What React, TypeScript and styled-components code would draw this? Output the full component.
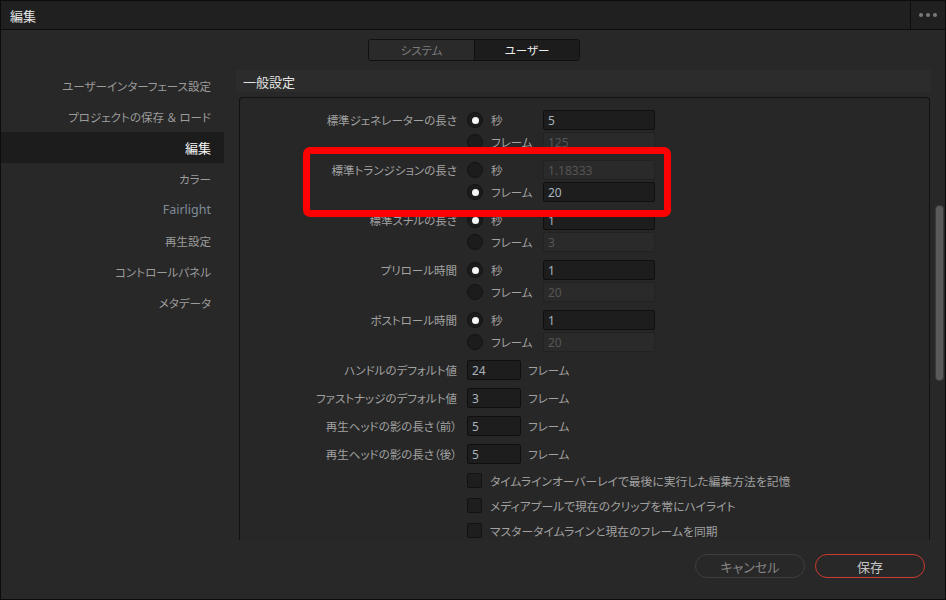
import React from "react";
import styled, { createGlobalStyle } from "styled-components";

const Global = createGlobalStyle`
  html, body { margin: 0; padding: 0; background: #282828; }
  body { font-family: "Noto Sans", "Noto Sans CJK JP", sans-serif; }
  * { box-sizing: border-box; }
`;

const Window = styled.div`
  position: relative;
  width: 946px;
  height: 600px;
  border: 1px solid #0c0c0c;
  background: #282828;
  display: flex;
  flex-direction: column;
  overflow: hidden;
  font-family: "Noto Sans", "Noto Sans CJK JP", sans-serif;
  font-feature-settings: "palt";
`;

const TitleBar = styled.div`
  height: 29px;
  flex-shrink: 0;
  display: flex;
  align-items: stretch;
  background: #202020;
  border-bottom: 1px solid #0e0e0e;
`;

const Title = styled.div`
  flex: 1;
  display: flex;
  align-items: center;
  padding-left: 9px;
  font-size: 13px;
  color: #e6e6e6;
`;

const MenuButton = styled.div`
  width: 35px;
  border-left: 1px solid #0e0e0e;
  display: flex;
  align-items: center;
  justify-content: center;
  gap: 3px;
`;

const Dot = styled.span`
  width: 4px;
  height: 4px;
  border-radius: 50%;
  background: #7a7a7a;
`;

const TabsRow = styled.div`
  height: 40px;
  flex-shrink: 0;
  display: flex;
  justify-content: center;
  padding-top: 9px;
  padding-left: 2px;
`;

const Tabs = styled.div`
  display: flex;
  height: 22px;
  border: 1px solid #101010;
  border-radius: 3px;
  overflow: hidden;
`;

const Tab = styled.div<{ $active?: boolean }>`
  width: 105px;
  display: flex;
  align-items: center;
  justify-content: center;
  font-size: 11.5px;
  color: ${(p) => (p.$active ? "#ececec" : "#7c7c7c")};
  background: ${(p) => (p.$active ? "#1c1c1c" : "#2a2a2a")};
  & + & { border-left: 1px solid #101010; }
`;

const Main = styled.div`
  height: 470px;
  flex-shrink: 0;
  display: flex;
  overflow: hidden;
`;

const Sidebar = styled.div`
  width: 223px;
  flex-shrink: 0;
  display: flex;
  flex-direction: column;
`;

const NavItem = styled.div<{ $active?: boolean; $muted?: boolean }>`
  height: 31px;
  flex-shrink: 0;
  display: flex;
  align-items: center;
  justify-content: flex-end;
  padding-right: 13px;
  color: ${(p) => (p.$active ? "#f4f4f4" : p.$muted ? "#7f8c98" : "#9c9c9c")};
  background: ${(p) => (p.$active ? "#1c1c1c" : "transparent")};
  font-size: ${(p) => (p.$active ? "13px" : p.$muted ? "12.5px" : "11.5px")};
`;

const Content = styled.div`
  flex: 1;
  margin-left: 12px;
  display: flex;
  flex-direction: column;
  min-width: 0;
`;

const SectionHeader = styled.div`
  height: 22px;
  flex-shrink: 0;
  display: flex;
  align-items: center;
  padding-left: 7px;
  margin-right: 14px;
  background: #2c2c2c;
  font-size: 13px;
  color: #e4e4e4;
`;

const ScrollArea = styled.div`
  flex: 1;
  display: flex;
  margin-top: 5px;
  min-height: 0;
`;

const Panel = styled.div`
  width: 691px;
  margin-left: 3px;
  flex-shrink: 0;
  border: 1px solid #121212;
  border-bottom: none;
  border-radius: 4px 4px 0 0;
  background: #272727;
  padding-top: 11px;
  display: flex;
  flex-direction: column;
  height: 480px;
`;

const Track = styled.div`
  width: 17px;
  flex-shrink: 0;
  padding-left: 5px;
`;

const Thumb = styled.div<{ $offset: number; $size: number }>`
  margin-top: ${(p) => p.$offset}px;
  width: 9px;
  height: ${(p) => p.$size}px;
  border-radius: 4px;
  background: #5a5a5a;
  border: 1px solid #3a3a3a;
`;

const RadioSection = styled.div`
  display: flex;
  flex-direction: column;
  gap: 6px;
`;

const Group = styled.div`
  display: flex;
  flex-direction: column;
`;

const FrameSection = styled.div`
  display: flex;
  flex-direction: column;
  margin-top: 3px;
`;

const Row = styled.div<{ $h: number }>`
  height: ${(p) => p.$h}px;
  flex-shrink: 0;
  display: flex;
  align-items: center;
`;

const Label = styled.div`
  width: 217px;
  flex-shrink: 0;
  text-align: right;
  font-size: 11.5px;
  color: #a2a2a2;
  white-space: nowrap;
`;

const Controls = styled.div`
  display: flex;
  align-items: center;
  margin-left: 10px;
`;

const Radio = styled.span<{ $on?: boolean }>`
  width: 16px;
  height: 16px;
  border-radius: 50%;
  background: #1c1c1c;
  border: 1px solid #131313;
  display: flex;
  align-items: center;
  justify-content: center;
  flex-shrink: 0;
  &::after {
    content: "";
    width: 7px;
    height: 7px;
    border-radius: 50%;
    background: #f6f6f6;
    display: ${(p) => (p.$on ? "block" : "none")};
  }
`;

const OptText = styled.span<{ $w?: number; $size?: number }>`
  margin-left: 8px;
  width: ${(p) => (p.$w ? `${p.$w}px` : "auto")};
  font-size: ${(p) => p.$size ?? 11.5}px;
  color: #a2a2a2;
  white-space: nowrap;
`;

const Field = styled.div<{ $w: number; $disabled?: boolean }>`
  width: ${(p) => p.$w}px;
  height: 20px;
  display: flex;
  align-items: center;
  padding-left: 4px;
  border-radius: 2px;
  font-family: "Noto Sans", sans-serif;
  font-size: 12px;
  background: ${(p) => (p.$disabled ? "#2a2a2a" : "#1d1d1d")};
  border: 1px solid ${(p) => (p.$disabled ? "#222222" : "#0f0f0f")};
  color: ${(p) => (p.$disabled ? "#555555" : "#a9b3bd")};
`;

const Unit = styled.span`
  margin-left: 7px;
  font-size: 11.5px;
  color: #a2a2a2;
`;

const CheckRows = styled.div`
  display: flex;
  flex-direction: column;
`;

const Check = styled.span`
  width: 15px;
  height: 15px;
  border-radius: 2px;
  background: #1e1e1e;
  border: 1px solid #121212;
  flex-shrink: 0;
`;

const Footer = styled.div`
  flex: 1;
  display: flex;
  justify-content: flex-end;
  align-items: flex-start;
  padding-top: 14px;
  padding-right: 20px;
  gap: 10px;
  background: #282828;
`;

const Button = styled.div<{ $primary?: boolean }>`
  width: 110px;
  height: 24px;
  border-radius: 12px;
  display: flex;
  align-items: center;
  justify-content: center;
  font-size: 13px;
  color: ${(p) => (p.$primary ? "#c4c4c4" : "#858585")};
  border: 1px solid ${(p) => (p.$primary ? "#cf3a2e" : "#3e3e3e")};
`;

const Annotation = styled.div`
  position: absolute;
  left: 302px;
  top: 146px;
  width: 368px;
  height: 70px;
  border: 7px solid #ff0000;
  border-radius: 7px;
  pointer-events: none;
`;

type RadioGroupData = {
  label: string;
  sec: string;
  frame: string;
  secOn: boolean;
};

const radioGroups: RadioGroupData[] = [
  { label: "標準ジェネレーターの長さ", sec: "5", frame: "125", secOn: true },
  { label: "標準トランジションの長さ", sec: "1.18333", frame: "20", secOn: false },
  { label: "標準スチルの長さ", sec: "1", frame: "3", secOn: true },
  { label: "プリロール時間", sec: "1", frame: "20", secOn: true },
  { label: "ポストロール時間", sec: "1", frame: "20", secOn: true },
];

const frameRows = [
  { label: "ハンドルのデフォルト値", value: "24" },
  { label: "ファストナッジのデフォルト値", value: "3" },
  { label: "再生ヘッドの影の長さ（前）", value: "5" },
  { label: "再生ヘッドの影の長さ（後）", value: "5" },
];

const checks = [
  "タイムラインオーバーレイで最後に実行した編集方法を記憶",
  "メディアプールで現在のクリップを常にハイライト",
  "マスタータイムラインと現在のフレームを同期",
];

const nav = [
  "ユーザーインターフェース設定",
  "プロジェクトの保存 ＆ ロード",
  "編集",
  "カラー",
  "Fairlight",
  "再生設定",
  "コントロールパネル",
  "メタデータ",
];

export default function App() {
  return (
    <>
      <Global />
      <Window>
        <TitleBar>
          <Title>編集</Title>
          <MenuButton>
            <Dot />
            <Dot />
            <Dot />
          </MenuButton>
        </TitleBar>
        <TabsRow>
          <Tabs>
            <Tab>システム</Tab>
            <Tab $active>ユーザー</Tab>
          </Tabs>
        </TabsRow>
        <Main>
          <Sidebar>
            {nav.map((n) => (
              <NavItem key={n} $active={n === "編集"} $muted={n === "Fairlight"}>
                {n}
              </NavItem>
            ))}
          </Sidebar>
          <Content>
            <SectionHeader>一般設定</SectionHeader>
            <ScrollArea>
              <Panel>
                <RadioSection>
                  {radioGroups.map((g) => (
                    <Group key={g.label}>
                      <Row $h={22}>
                        <Label>{g.label}</Label>
                        <Controls>
                          <Radio $on={g.secOn} />
                          <OptText $w={52}>秒</OptText>
                          <Field $w={112} $disabled={!g.secOn}>{g.sec}</Field>
                        </Controls>
                      </Row>
                      <Row $h={22}>
                        <Label />
                        <Controls>
                          <Radio $on={!g.secOn} />
                          <OptText $w={52}>フレーム</OptText>
                          <Field $w={112} $disabled={g.secOn}>{g.frame}</Field>
                        </Controls>
                      </Row>
                    </Group>
                  ))}
                </RadioSection>
                <FrameSection>
                  {frameRows.map((r) => (
                    <Row $h={28} key={r.label}>
                      <Label>{r.label}</Label>
                      <Controls>
                        <Field $w={54}>{r.value}</Field>
                        <Unit>フレーム</Unit>
                      </Controls>
                    </Row>
                  ))}
                </FrameSection>
                <CheckRows>
                  {checks.map((c) => (
                    <Row $h={25} key={c}>
                      <Label />
                      <Controls>
                        <Check />
                        <OptText $size={11.8}>{c}</OptText>
                      </Controls>
                    </Row>
                  ))}
                </CheckRows>
              </Panel>
              <Track>
                <Thumb $offset={108} $size={176} />
              </Track>
            </ScrollArea>
          </Content>
        </Main>
        <Footer>
          <Button>キャンセル</Button>
          <Button $primary>保存</Button>
        </Footer>
        <Annotation />
      </Window>
    </>
  );
}
